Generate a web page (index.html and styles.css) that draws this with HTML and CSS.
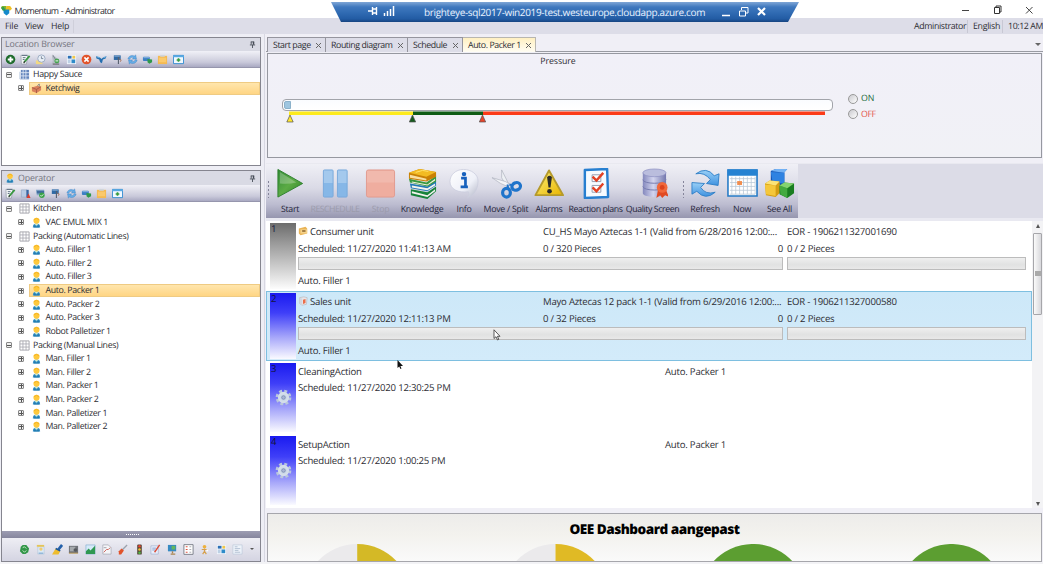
FILE: index.html
```html
<!DOCTYPE html>
<html lang="en">
<head>
<meta charset="utf-8">
<title>Momentum - Administrator</title>
<link rel="stylesheet" href="styles.css">
</head>
<body>
<svg class="sprite" width="0" height="0" aria-hidden="true">
  <defs>
    <linearGradient id="gGreen" x1="0" y1="0" x2="1" y2="1"><stop offset="0" stop-color="#2f8a35"/><stop offset=".5" stop-color="#5cab45"/><stop offset="1" stop-color="#2f8425"/></linearGradient>
    <linearGradient id="gBlue" x1="0" y1="0" x2="0" y2="1"><stop offset="0" stop-color="#9ad0f7"/><stop offset="1" stop-color="#3f92e0"/></linearGradient>
    <linearGradient id="gYellow" x1="0" y1="0" x2="1" y2="1"><stop offset="0" stop-color="#fff27a"/><stop offset="1" stop-color="#e8b400"/></linearGradient>
    <linearGradient id="gDb" x1="0" y1="0" x2="1" y2="0"><stop offset="0" stop-color="#8488bd"/><stop offset=".45" stop-color="#d3d5ef"/><stop offset="1" stop-color="#7377ad"/></linearGradient>
    <linearGradient id="gBubble" x1="0" y1="0" x2="1" y2="1"><stop offset="0" stop-color="#fff"/><stop offset=".6" stop-color="#eef0f8"/><stop offset="1" stop-color="#b2b5c5"/></linearGradient>
  </defs>
  <symbol id="plus" viewBox="0 0 12 12"><circle cx="6" cy="6" r="5.2" fill="#1d6b2b"/><path d="M6 3v6M3 6h6" stroke="#fff" stroke-width="2"/></symbol>
  <symbol id="edit" viewBox="0 0 12 12"><path d="M1 1.5h7.500l-1.500 9.500H1.500z" fill="#f4f6f8" stroke="#8b93a0" stroke-width=".7"/><path d="M2 1.500h6M3 4h3M3 6h2" stroke="#56697c"/><path d="M4.500 9l6-7" stroke="#37963f" stroke-width="2"/><path d="M4 10l1.300-2" stroke="#333" stroke-width="1.200"/></symbol>
  <symbol id="clock" viewBox="0 0 12 12"><rect x="1" y="7" width="7" height="4" fill="#f2d982"/><circle cx="7" cy="5" r="4" fill="#e8eef6" stroke="#98a9bf"/><path d="M7 2.500V5h2" fill="none" stroke="#5a6b80" stroke-width=".8"/></symbol>
  <symbol id="tools" viewBox="0 0 12 12"><path d="M2 2l4 1 4 5-2 3H2l1-4z" fill="#b6bcc6"/><path d="M3 1l3 5" stroke="#777f8b"/><circle cx="7.500" cy="7.500" r="2.700" fill="#47a452"/><path d="M6 7.500h3" stroke="#fff"/><path d="M3 11h7" stroke="#555"/></symbol>
  <symbol id="tiles" viewBox="0 0 12 12"><rect x="1" y="1" width="10" height="10" fill="#eef4fb"/><path d="M2 2h4v3H2z" fill="#2c6fb5"/><path d="M7 2h3v3H7z" fill="#f2c748"/><path d="M2 6h3v4H2z" fill="#bcd0e4"/><path d="M6 6h4v4H6z" fill="#2e8bc9"/></symbol>
  <symbol id="delete" viewBox="0 0 12 12"><circle cx="6" cy="6" r="5.300" fill="#e2532b"/><path d="M3.700 3.700l4.600 4.600M8.300 3.700L3.700 8.300" stroke="#fff" stroke-width="1.700"/></symbol>
  <symbol id="bird" viewBox="0 0 12 12"><path d="M0 2.500l4 1 2 2 2-2 3.500-1-1 2.500-3 1-1 4-2-1-1-3-3-1z" fill="#256fb0"/><path d="M1 3l3 1M8 4l3-1" stroke="#7fc0ea"/></symbol>
  <symbol id="flag" viewBox="0 0 12 12"><path d="M2 1.500h7.500v5H2z" fill="#316aa5"/><path d="M7 3v8" stroke="#57606e" stroke-width="1.200"/><path d="M2.500 2.500h6" stroke="#7ea6d0"/><path d="M8 5.500l2 1-1 2" stroke="#a9745d" fill="none"/></symbol>
  <symbol id="sync" viewBox="0 0 12 12"><path d="M1 5.500C1.500 2.500 5 .5 8 2.200L9.500 1l.8 4.500H6L7 4C5 3 3.500 4 3 5.800zM11 6.500C10.500 9.500 7 11.500 4 9.800L2.500 11l-.8-4.500H6L5 8c2 1 3.500 0 4-1.800z" fill="#65aee8" stroke="#2f75bb" stroke-width=".4"/></symbol>
  <symbol id="link" viewBox="0 0 12 12"><rect x="1" y="3" width="7.500" height="4.500" rx="1" fill="#3c7fc4"/><path d="M1.500 4h6.500" stroke="#8ebae4"/><path d="M6 5.500l5 .5v3L8 10.500 6 9z" fill="#2f994b"/></symbol>
  <symbol id="clip" viewBox="0 0 12 12"><path d="M1 2h10v9H1z" fill="#f4b952"/><path d="M3.500 1h5v2h-5z" fill="#d0d4da"/><path d="M2 4h8v5H2z" fill="#fbc96b"/></symbol>
  <symbol id="window" viewBox="0 0 12 12"><path d="M.5 1.500h11v9H.5z" fill="#f1f9ff" stroke="#2f8ad0"/><path d="M0 2.500h12" stroke="#58a9e3" stroke-width="2"/><path d="M6 4.500v4M4 6.500h4" stroke="#359b3f" stroke-width="1.800"/></symbol>
  <symbol id="pipe" viewBox="0 0 12 12"><path d="M1.500 2h6v8h-6z" fill="#b9cbe4" stroke="#8095b5" stroke-width=".5"/><path d="M7 2h2.500v8H7z" fill="#3865a2"/><path d="M7 11l2.300-5 2.200 5z" fill="#da3c2e"/></symbol>
  <symbol id="cart" viewBox="0 0 12 12"><path d="M1 2h9v6H2z" fill="#88a9c9"/><path d="M2 3h8v3H2z" fill="#406c9d"/><circle cx="7.500" cy="8" r="3" fill="#39a348"/><path d="M6 8l1 1 2-2" fill="none" stroke="#fff"/></symbol>
  <symbol id="person" viewBox="0 0 12 12"><path d="M2 11.500Q2 7 6 7t4 4.500z" fill="#3d96cf"/><path d="M3 8.500l3 2 3-2v3H3z" fill="#247cad"/><path d="M4 7.500l2 2 2-2z" fill="#d9f0c8"/><circle cx="6" cy="4" r="3.300" fill="#ffc93c"/><path d="M3 3Q6 0 9 3" fill="none" stroke="#f3b01f"/></symbol>
  <symbol id="grid" viewBox="0 0 12 12"><path d="M1 1h10v10H1z" fill="#fff" stroke="#98989f" stroke-width=".9"/><path d="M4.300 1v10M7.700 1v10M1 4.300h10M1 7.700h10" stroke="#a8a8b0" stroke-width=".9"/></symbol>
  <symbol id="building" viewBox="0 0 12 12"><path d="M2 1h9v10H2z" fill="#6486bd"/><path d="M1 3v8h10" fill="none" stroke="#b6c7df"/><path d="M4.500 1v10M7.500 1v10M2 4h9M2 7.500h9" stroke="#e4edf9" stroke-width=".9"/></symbol>
  <symbol id="brick" viewBox="0 0 12 12"><path d="M1 5l6-2 4 1v4l-5 3-5-2z" fill="#d9805c"/><path d="M1 5l5 2 5-3M6 7v4" fill="none" stroke="#a75b45"/><path d="M7 3l2-2v3" stroke="#7c8188" fill="none"/></symbol>
  <symbol id="pin" viewBox="0 0 8 8"><path d="M2 1h4M2.500 1v3M5 1v3M1 4.500h6M4 4.500V8" stroke="#454a55" fill="none"/><path d="M4.500 1h1.500v3H4.500z" fill="#454a55"/></symbol>
  <symbol id="recycle" viewBox="0 0 12 12"><path d="M4 1h4l3 4-1 4-3 2H4L1 8l1-5z" fill="#319548"/><path d="M4 4l2-1 2 2M8 7L6 9 4 7" fill="none" stroke="#c8edc7"/></symbol>
  <symbol id="badge" viewBox="0 0 12 12"><path d="M3 3h7v8H3z" fill="#dbe9f5" stroke="#a9bdd2" stroke-width=".5"/><path d="M2 1h8v2H2z" fill="#e5c557"/><circle cx="6.500" cy="5.500" r="1.800" fill="#f0cc72"/><path d="M4 10h5" stroke="#6a9dcc"/></symbol>
  <symbol id="brush" viewBox="0 0 12 12"><path d="M11 1L7 6" stroke="#2360aa" stroke-width="3"/><path d="M4 5l5 3-2 3.500H0z" fill="#eebc2f"/><path d="M4 5l5 2.500" stroke="#1b5597" stroke-width="1.800"/></symbol>
  <symbol id="camera" viewBox="0 0 12 12"><path d="M1 2h10v8H1z" fill="#6f7278"/><path d="M2 3h6v5H2z" fill="#a5a9ad"/><circle cx="8" cy="6.500" r="2" fill="#55585d"/><path d="M1 10h10" stroke="#bb974e"/></symbol>
  <symbol id="chart" viewBox="0 0 12 12"><path d="M1 1h10v10H1z" fill="#d5eaf9" stroke="#78a5ca" stroke-width=".6"/><path d="M1 8l3-3 2 2 5-5v9H1z" fill="#2f9851"/></symbol>
  <symbol id="sheet" viewBox="0 0 12 12"><path d="M2 1h6l3 3v7H2z" fill="#f5f5f8" stroke="#9ca0ab" stroke-width=".7"/><path d="M3 9l3-3 2 0 2-2" fill="none" stroke="#ca5b52"/><path d="M3 4h3" stroke="#9ca0ab"/></symbol>
  <symbol id="dart" viewBox="0 0 12 12"><path d="M11 1L5 7" stroke="#9ca3ad" stroke-width="1.500"/><path d="M5 5l2.500 2-3 4.500H2V8z" fill="#e1532b"/></symbol>
  <symbol id="traffic" viewBox="0 0 12 12"><rect x="3.500" y=".5" width="5" height="11" rx="1" fill="#574638"/><circle cx="6" cy="2.500" r="1.400" fill="#e9442d"/><circle cx="6" cy="6" r="1.400" fill="#f2c435"/><circle cx="6" cy="9.500" r="1.400" fill="#4fb646"/></symbol>
  <symbol id="note" viewBox="0 0 12 12"><path d="M1 2h8v9H1z" fill="#e8effc" stroke="#93a5c8" stroke-width=".6"/><path d="M2.500 4.500h4M2.500 6.500h3" stroke="#839fce"/><path d="M10.500 1L5 9" stroke="#da4a36" stroke-width="1.500"/></symbol>
  <symbol id="screen" viewBox="0 0 12 12"><path d="M1 1h9v7H1z" fill="#368ac2"/><path d="M5 2h4v4H5z" fill="#64b75d"/><path d="M6 8v2M4 11h5" stroke="#a98550" stroke-width="1.500"/></symbol>
  <symbol id="checklist" viewBox="0 0 12 12"><path d="M1 .7h10v10.600H1z" fill="#fff" stroke="#777b85"/><path d="M3 3h2M3 6h2M3 9h2" stroke="#df513e" stroke-width="1.300"/><path d="M7 3h2M7 6h2M7 9h2" stroke="#a7a7b0"/></symbol>
  <symbol id="worker" viewBox="0 0 12 12"><circle cx="6" cy="3" r="2" fill="#eeb13d"/><path d="M3 6h6M6 5v3l-2 3M6 8l2 3" stroke="#d6a04c" fill="none" stroke-width="1.300"/><path d="M8 6h2v2H8z" fill="#fff"/></symbol>
  <symbol id="form" viewBox="0 0 12 12"><path d="M1 1h10v10H1z" fill="#eef3fa" stroke="#b8c6d8" stroke-width=".7"/><path d="M3 3h3M3 5h6M3 7h4M3 9h6" stroke="#b0bfd1"/></symbol>
  <symbol id="carton" viewBox="0 0 12 12"><path d="M1 3l8-2 2 2v6l-8 2-2-2z" fill="#eab456"/><path d="M3 4h8v5H3z" fill="#f5d28a"/><path d="M5 5h4v2H5z" fill="#936e38"/></symbol>
  <symbol id="box" viewBox="0 0 12 12"><path d="M2 2l5-1 4 1-1 8-5 1-3-2z" fill="#e5e6eb" stroke="#b4a7a7" stroke-width=".6"/><path d="M2 2l3 1v8L2 9z" fill="#d3d7e0"/><path d="M6 4.500l3-1v5l-3 1z" fill="#ec6e49"/></symbol>
  <symbol id="gear" viewBox="0 0 16 16"><circle cx="8" cy="8" r="6.100" fill="none" stroke="#b9c7dc" stroke-width="2.600" stroke-dasharray="2.700 2.090"/><circle cx="8" cy="8" r="4.100" fill="#c7d7e8" stroke="#d4deea" stroke-width="2.400"/><circle cx="8" cy="8" r="1.700" fill="#a9b7d8" stroke="#7986a8" stroke-width=".7"/></symbol>
</svg>

<div class="app">
  <header class="titlebar">
    <svg class="logo" viewBox="0 0 12 12"><path d="M1 1h5v5L2 6 0 3z" fill="#7eb52f"/><path d="M6 1h4l2 3-2 2H5z" fill="#f0bf21"/><path d="M2.500 5h6.500v4L6 11.500 3 9z" fill="#158acb"/><path d="M0 3l3-1 2 4H2z" fill="#329b53"/></svg>
    <span class="app-name">Momentum - Administrator</span>
    <svg class="winctl" viewBox="0 0 80 12"><path d="M2 6.500h7" stroke="#444" /><path d="M34.500 3.500h5v6h-5zM36 3V2h5v6h-1.500" fill="none" stroke="#333"/><path d="M66 3l6.500 6.500M72.500 3L66 9.500" stroke="#444"/></svg>
  </header>
  <nav class="menubar">
    <span class="m-file">File</span><span class="m-view">View</span><span class="m-help">Help</span>
    <span class="status first">Administrator</span><span class="status lang">English</span><span class="status time">10:12 AM</span>
  </nav>

  <div class="rdp">
    <svg class="rdp-left" viewBox="0 0 30 12"><path d="M1 6h4M5.500 2v8M5.500 4h4M5.500 8h4M9.500 2v8" stroke="#fff" stroke-width="1.400" fill="none"/><path d="M17.500 8v3M20.500 6v5M23.500 4v7M26.500 1v10" stroke="#fff" stroke-width="1.500"/></svg>
    <span class="rdp-host">brighteye-sql2017-win2019-test.westeurope.cloudapp.azure.com</span>
    <svg class="rdp-ctl" viewBox="0 0 48 14"><path d="M1 10.500h8" stroke="#fff" stroke-width="1.600"/><path d="M18.500 6h6v5h-6zM20.500 5V2.500h6.500V8H25" stroke="#fff" fill="none"/><path d="M37 3l7 7M44 3l-7 7" stroke="#fff" stroke-width="2.200"/></svg>
  </div>

  <main class="main">
    <aside class="left">
      <section class="panel location">
        <h2 class="panel-head"><span>Location Browser</span><svg class="pin"><use href="#pin"/></svg></h2>
        <div class="tools">
          <svg><use href="#plus"/></svg><svg><use href="#edit"/></svg><svg><use href="#clock"/></svg><svg><use href="#tools"/></svg><svg><use href="#tiles"/></svg><svg><use href="#delete"/></svg><svg><use href="#bird"/></svg><svg><use href="#flag"/></svg><svg><use href="#sync"/></svg><svg><use href="#link"/></svg><svg><use href="#clip"/></svg><svg><use href="#window"/></svg>
        </div>
        <div class="tree">
          <div class="node root"><i class="exp minus"></i><span class="label"><svg><use href="#building"/></svg>Happy Sauce</span></div>
          <div class="node"><i class="exp"></i><span class="label sel"><svg><use href="#brick"/></svg>Ketchwig</span></div>
        </div>
      </section>
      <section class="panel operator">
        <h2 class="panel-head"><svg class="head-icon"><use href="#person"/></svg><span>Operator</span><svg class="pin"><use href="#pin"/></svg></h2>
        <div class="tools">
          <svg><use href="#edit"/></svg><svg><use href="#pipe"/></svg><svg><use href="#cart"/></svg><svg><use href="#flag"/></svg><svg><use href="#sync"/></svg><svg><use href="#link"/></svg><svg><use href="#clip"/></svg><svg><use href="#window"/></svg>
        </div>
        <div class="tree">
          <div class="node root"><i class="exp minus"></i><span class="label"><svg><use href="#grid"/></svg>Kitchen</span></div>
          <div class="node"><i class="exp"></i><span class="label"><svg><use href="#person"/></svg>VAC EMUL MIX 1</span></div>
          <div class="node root"><i class="exp minus"></i><span class="label"><svg><use href="#grid"/></svg>Packing (Automatic Lines)</span></div>
          <div class="node"><i class="exp"></i><span class="label"><svg><use href="#person"/></svg>Auto. Filler 1</span></div>
          <div class="node"><i class="exp"></i><span class="label"><svg><use href="#person"/></svg>Auto. Filler 2</span></div>
          <div class="node"><i class="exp"></i><span class="label"><svg><use href="#person"/></svg>Auto. Filler 3</span></div>
          <div class="node"><i class="exp"></i><span class="label sel"><svg><use href="#person"/></svg>Auto. Packer 1</span></div>
          <div class="node"><i class="exp"></i><span class="label"><svg><use href="#person"/></svg>Auto. Packer 2</span></div>
          <div class="node"><i class="exp"></i><span class="label"><svg><use href="#person"/></svg>Auto. Packer 3</span></div>
          <div class="node"><i class="exp"></i><span class="label"><svg><use href="#person"/></svg>Robot Palletizer 1</span></div>
          <div class="node root"><i class="exp minus"></i><span class="label"><svg><use href="#grid"/></svg>Packing (Manual Lines)</span></div>
          <div class="node"><i class="exp"></i><span class="label"><svg><use href="#person"/></svg>Man. Filler 1</span></div>
          <div class="node"><i class="exp"></i><span class="label"><svg><use href="#person"/></svg>Man. Filler 2</span></div>
          <div class="node"><i class="exp"></i><span class="label"><svg><use href="#person"/></svg>Man. Packer 1</span></div>
          <div class="node"><i class="exp"></i><span class="label"><svg><use href="#person"/></svg>Man. Packer 2</span></div>
          <div class="node"><i class="exp"></i><span class="label"><svg><use href="#person"/></svg>Man. Palletizer 1</span></div>
          <div class="node"><i class="exp"></i><span class="label"><svg><use href="#person"/></svg>Man. Palletizer 2</span></div>
        </div>
        <div class="splitter"><i></i></div>
        <div class="dock">
          <svg><use href="#recycle"/></svg><svg><use href="#badge"/></svg><svg><use href="#brush"/></svg><svg><use href="#camera"/></svg><svg><use href="#chart"/></svg><svg><use href="#sheet"/></svg><svg><use href="#dart"/></svg><svg><use href="#traffic"/></svg><svg><use href="#note"/></svg><svg><use href="#screen"/></svg><svg><use href="#checklist"/></svg><svg><use href="#worker"/></svg><svg><use href="#tiles"/></svg><svg><use href="#form"/></svg><i class="more"></i>
        </div>
      </section>
    </aside>

    <section class="right">
      <div class="tabs">
        <div class="tab t1"><span>Start page</span><i class="x"></i></div><div class="tab t2"><span>Routing diagram</span><i class="x"></i></div><div class="tab t3"><span>Schedule</span><i class="x"></i></div><div class="tab t4 on"><span>Auto. Packer 1</span><i class="x"></i></div>
        <i class="tabmenu"></i>
      </div>
      <div class="pressure">
        <div class="pressure-title">Pressure</div>
        <div class="pressure-body">
          <div class="gauge">
            <div class="track"><i></i></div>
            <svg class="scale" viewBox="0 0 551 12"><path d="M7 2.200h124" stroke="#fdea1d" stroke-width="3.600"/><path d="M131 2.200h70" stroke="#0f5c16" stroke-width="3.600"/><path d="M201 2.200h342" stroke="#fb3b18" stroke-width="3.600"/><g stroke="#555" stroke-width=".7"><path d="M8 4l3.200 7H4.800z" fill="#ffe62d"/><path d="M130.500 4l3.200 7h-6.400z" fill="#155b1d"/><path d="M200.500 4l3.200 7h-6.400z" fill="#e8432a"/></g></svg>
          </div>
          <div class="radios"><div class="on-text"><i></i>ON</div><div class="off-text"><i></i>OFF</div></div>
        </div>
      </div>

      <div class="ribbon">
        <div class="ribbon-in">
          <i class="grip"></i>
          <div class="btn b32"><svg viewBox="0 0 32 32"><path d="M3 1.500v28.500L28.500 16z" fill="url(#gGreen)" stroke="#2f8130" stroke-linejoin="round"/><path d="M5 4v12q9 1 17-1z" fill="#fff" opacity=".25"/></svg><span>Start</span></div>
          <div class="btn b58 off"><svg viewBox="0 0 32 32"><g fill="#86b7e7" stroke="#79a9dc"><rect x="3.500" y="2" width="10" height="28" rx="1"/><rect x="18" y="2" width="10" height="28" rx="1"/></g><path d="M4 2.500h9v13H4zM18.500 2.500h9v13h-9z" fill="#fff" opacity=".25"/></svg><span>RESCHEDULE</span></div>
          <div class="btn b33 off"><svg viewBox="0 0 32 32"><rect x="1.500" y="2" width="29" height="28" rx="2" fill="#efad9f" stroke="#e19b90"/><path d="M2 3h28v12H2z" fill="#fff" opacity=".15"/></svg><span>Stop</span></div>
          <div class="btn b50"><svg viewBox="0 0 32 32"><path d="M4 22l17 3 9-6v5l-9 8-17-4z" fill="#17833b"/><path d="M5 24l16 4 8-6v2l-8 6-16-4z" fill="#f1f2ec"/><path d="M3 16l18 3 9-6v5l-9 6-17-3z" fill="#2179b6"/><path d="M5 18l16 3 8-5v2l-8 5-16-3z" fill="#f4f4ee"/><path d="M2 11l18 4 10-7v6l-9 5-18-4z" fill="#37993f"/><path d="M5 14l16 3 8-6v2l-8 5-16-3z" fill="#f5f0dd"/><path d="M2 5L13 1l17 3v5l-10 5L2 11z" fill="#c98005"/><path d="M2 5L13 1l17 3-10 5z" fill="#f2bb23"/><path d="M3 7l17 4v2L3 10z" fill="#f8dfa1"/><path d="M9 4.500l7-2 6 1" stroke="#ffe26e" fill="none"/></svg><span>Knowledge</span></div>
          <div class="btn b34"><svg viewBox="0 0 32 32"><path d="M15 1.500c8 0 15 5 15 12 0 10-6 16-11 17 2-3 2-4 1-6C10 26 1 22 1 14 1 7 7 1.500 15 1.500z" fill="url(#gBubble)" stroke="#cacddd" stroke-width=".8"/><path d="M12.500 10.500H17V19M12 19.500h7.500" fill="none" stroke="#1761bd" stroke-width="2.800"/><circle cx="15.500" cy="6.300" r="2.300" fill="#1761bd"/></svg><span>Info</span></div>
          <div class="btn b50"><svg viewBox="0 0 32 32"><path d="M11 2l7 14-2 3-5-9z" fill="#edf0f4" stroke="#a3a8b5" stroke-width=".6"/><path d="M1 10l14 4 5 3-3 2-7-3z" fill="#f4f5f8" stroke="#a3a8b5" stroke-width=".6"/><ellipse cx="16" cy="25.500" rx="4" ry="4.500" fill="none" stroke="#1f74cb" stroke-width="3.300"/><ellipse cx="26" cy="19" rx="4.500" ry="3.800" transform="rotate(-25 26 19)" fill="none" stroke="#1f74cb" stroke-width="3.300"/><path d="M17 17l1 5M19 17l3 1" stroke="#1f74cb" stroke-width="2"/></svg><span>Move / Split</span></div>
          <div class="btn b36"><svg viewBox="0 0 32 32"><path d="M15.500 2.500L30 28H1.500z" fill="url(#gYellow)" stroke="#b59a2c" stroke-width="2" stroke-linejoin="round"/><path d="M13.500 9.500q2.500-3 5 0L17 20h-2z" fill="#2c2b28"/><circle cx="16" cy="24" r="2.400" fill="#2c2b28"/></svg><span>Alarms</span></div>
          <div class="btn b57"><svg viewBox="0 0 32 32"><path d="M5 2l23-1 1 29-24 1z" fill="#f6fbff" stroke="#277fd0" stroke-width="2.500" stroke-linejoin="round"/><path d="M12.500 7h9v7h-9zM12.500 18h9v7h-9z" fill="#fff" stroke="#949db0"/><path d="M13 9l4 4 7-8M13 20l4 4 7-8" fill="none" stroke="#e24124" stroke-width="2.500"/></svg><span>Reaction plans</span></div>
          <div class="btn b57"><svg viewBox="0 0 32 32"><path d="M6 5v21c0 5 24 5 24 0V5z" fill="url(#gDb)"/><ellipse cx="18" cy="5" rx="12" ry="4" fill="#babddd" stroke="#8b8fc1" stroke-width=".7"/><path d="M6 12c0 5 24 5 24 0M6 19c0 5 24 5 24 0" fill="none" stroke="#777cae"/><path d="M22 21l-2 10 4-3 2 3 3-3 4 2-4-10z" fill="#e14a22"/><circle cx="26" cy="20" r="5.500" fill="#f1683a"/><circle cx="26" cy="20" r="2.500" fill="#dc421d"/></svg><span>Quality Screen</span></div>
          <i class="grip"></i>
          <div class="btn b36"><svg viewBox="0 0 32 32"><g fill="url(#gBlue)" stroke="#2c7cc4" stroke-width=".9" stroke-linejoin="round"><path d="M6 6Q17-2 25 8l5-2-1 12-12-2 4-4Q15 4 6 6z"/><path d="M26 25Q16 34 7 24l-5 3V15l13 1-4 4q5 8 15 5z"/></g></svg><span>Refresh</span></div>
          <div class="btn b38"><svg viewBox="0 0 32 32"><path d="M1 2h30v27H1z" fill="#fff" stroke="#2379c5" stroke-width="1.600"/><path d="M.5 1.500h31V8H.5z" fill="#2683d2"/><path d="M3 11h26M3 15h26M3 19h26M3 23h26M3 27h26M5 9v18M9 9v18M13 9v18M17 9v18M21 9v18M25 9v18M29 9v18" stroke="#b8c7d6" stroke-width=".8"/><path d="M10.500 13.500h5v4h-5z" fill="#f18d4d"/></svg><span>Now</span></div>
          <div class="btn b37"><svg viewBox="0 0 32 32"><path d="M7 3l5-2h12l-3 3v11l-4 3-10-3z" fill="#1454b4"/><path d="M7 4l14 1v11L9 15z" fill="#2f82e1"/><path d="M7 3l5-2h12l-3 4z" fill="#72b1f4"/><path d="M1 16l5-3 10 1 1 11-5 5-10-2z" fill="#d49c12"/><path d="M1 17l11 1v11L2 27z" fill="#f5c73a"/><path d="M1 16l5-3 10 1-4 4z" fill="#fbe377"/><path d="M16 18l5-3 10 1v10l-7 5-8-4z" fill="#197d20"/><path d="M16 18l8 3v10l-7-4z" fill="#43aa3f"/><path d="M16 18l5-3 10 1-7 5z" fill="#85d370"/></svg><span>See All</span></div>
        </div>
      </div>

      <div class="list">
        <div class="items">
          <article class="item h70">
            <div class="stripe grey"><b>1</b></div>
            <div class="grid">
              <div class="ttl"><svg><use href="#carton"/></svg>Consumer unit</div><div class="mid">CU_HS Mayo Aztecas 1-1 (Valid from 6/28/2016 12:00:...</div><div class="eor">EOR - 1906211327001690</div>
              <div>Scheduled: 11/27/2020 11:41:13 AM</div><div class="count"><span>0 / 320 Pieces</span><span>0</span></div><div>0 / 2 Pieces</div>
              <div class="bar wide"></div><div class="bar"></div>
              <div class="foot">Auto. Filler 1</div>
            </div>
          </article>
          <article class="item h70 picked">
            <div class="stripe"><b>2</b></div>
            <div class="grid">
              <div class="ttl"><svg><use href="#box"/></svg>Sales unit</div><div class="mid">Mayo Aztecas 12 pack 1-1 (Valid from 6/29/2016 12:00:...</div><div class="eor">EOR - 1906211327000580</div>
              <div>Scheduled: 11/27/2020 12:11:13 PM</div><div class="count"><span>0 / 32 Pieces</span><span>0</span></div><div>0 / 2 Pieces</div>
              <div class="bar wide"></div><div class="bar"></div>
              <div class="foot">Auto. Filler 1</div>
            </div>
          </article>
          <article class="item h73">
            <div class="stripe"><b>3</b><svg><use href="#gear"/></svg></div>
            <div class="action"><div class="line"><span>CleaningAction</span><span>Auto. Packer 1</span></div><div class="line">Scheduled: 11/27/2020 12:30:25 PM</div></div>
          </article>
          <article class="item h73">
            <div class="stripe"><b>4</b><svg><use href="#gear"/></svg></div>
            <div class="action"><div class="line"><span>SetupAction</span><span>Auto. Packer 1</span></div><div class="line">Scheduled: 11/27/2020 1:00:25 PM</div></div>
          </article>
        </div>
        <div class="scroll"><i class="up"></i><div class="thumb"></div><i class="down"></i></div>
      </div>

      <div class="dash">
        <div class="dash-title">OEE Dashboard aangepast</div>
        <svg viewBox="1.500 0 775 19"><path d="M49.700 19A53.700 53.700 0 0 1 90.700 0v19z" fill="#ebeaec"/><path d="M90.700 0a53.700 53.700 0 0 1 41 19h-41z" fill="#d4b926"/><path d="M248 19A53.700 53.700 0 0 1 289 0v19z" fill="#ebeaec"/><path d="M289 0a53.700 53.700 0 0 1 41 19h-41z" fill="#e0ba25"/><path d="M445.500 19a53.700 53.700 0 0 1 82 0z" fill="#5c9e31"/><path d="M644 19a53.700 53.700 0 0 1 82 0z" fill="#5c9e31"/></svg>
      </div>
    </section>
  </main>

  <svg class="cursor c1" viewBox="0 0 9 12"><path d="M1 .8v8.700l2-1.800 1.500 3.300 1.300-.6L4.400 7.300H7z" fill="#fff" stroke="#333" stroke-width=".8"/></svg>
  <svg class="cursor c2" viewBox="0 0 9 12"><path d="M.5 0v8l1.700-1.500L3.500 9l1-.5-1.100-2.500H6z" fill="#111"/></svg>
</div>
</body>
</html>
```
FILE: styles.css
```css
* { box-sizing: border-box; }
body { margin: 0; overflow: hidden; text-rendering: geometricPrecision; }
body, h2 { font: 8.800px/13px "Open Sans", "Noto Sans", sans-serif; color: #2d2d33; }
i { font-style: normal; }
svg { display: block; flex: none; }
.sprite { position: absolute; }
.app { position: relative; width: 1043px; height: 564px; display: flex; flex-direction: column; background: #dfdfe9; border-bottom: 2px solid #f3f3f6; letter-spacing: -.2px; white-space: nowrap; }

/* Window chrome */
.titlebar { height: 18px; background: #fff; display: flex; align-items: center; padding: 2px 3px 0 1px; font-size: 8.900px; }
.logo { width: 11px; height: 11px; margin-right: 2.500px; }
.app-name { letter-spacing: -.6px; word-spacing: .5px; }
.winctl { width: 80px; height: 12px; margin-left: auto; }
.menubar { height: 16px; display: flex; align-items: center; background: #dddde8; padding: 1px 0 0 5px; }
.m-file { width: 20px; }
.m-view { width: 26px; }
.m-help { border-right: 1px solid #cfcfda; width: 23px; }
.status { border-left: 1px solid #c8c8d4; padding-left: 5px; }
.status.first { margin-left: auto; border: 0; width: 53px; padding: 0; letter-spacing: -.35px; }
.status.lang { width: 35px; letter-spacing: -.3px; }
.status.time { width: 41px; letter-spacing: -.4px; }

.rdp { position: absolute; left: 331px; top: 2px; width: 468px; height: 20px; display: flex; align-items: center; color: #e9f3ff; background: linear-gradient(#7fa6d6 0, #3f78be 25%, #2d68b0 60%, #225ba3 85%, #174480 100%); clip-path: polygon(0 0, 100% 0, 457px 100%, 10px 100%); font-size: 10px; letter-spacing: -.35px; }
.rdp-left { width: 30px; height: 12px; margin: 0 27px 2px 36px; }
.rdp-host { width: 297px; }
.rdp-ctl { width: 48px; height: 14px; margin-bottom: 1px; }

.main { flex: 1; display: flex; min-height: 0; }
.left { flex: none; width: 265px; padding: 3px 3px 0 1px; display: flex; flex-direction: column; gap: 4px; background: #eeeef5; border-right: 1px solid #d8d8e2; }
.panel { background: #fff; border: 1px solid #85858f; display: flex; flex-direction: column; }
.location { height: 129px; }
.operator { flex: 1; min-height: 0; }
.panel-head { display: flex; align-items: center; height: 13px; margin: 0; padding: 0 4px 0 3px; background: #d9dae4; color: #74747e; letter-spacing: -.12px; }
.operator .panel-head { height: 14px; }
.head-icon { width: 10px; height: 10px; margin: 0 3px 0 0; }
.pin { width: 7px; height: 7px; margin-left: auto; }
.tools { display: flex; align-items: center; gap: 4.300px; height: 17px; padding-left: 2.500px; background: linear-gradient(#f1f1f7, #c9c9da 70%, #a9a9c2); border-bottom: 1px solid #9696ad; }
.tools svg { width: 11px; height: 11px; }

/* Trees */
.tree { flex: 1; min-height: 0; letter-spacing: -.36px; }
.node { height: 13.630px; display: flex; align-items: center; padding-left: 16px; }
.node.root { padding-left: 4px; }
.exp { width: 6px; height: 6px; flex: none; border: 1px solid #888; border-radius: 1px; background: linear-gradient(#555, #555) 50% 50% / 4px 1px no-repeat, linear-gradient(#555, #555) 50% 50% / 1px 4px no-repeat, #eee; }
.exp.minus { background: linear-gradient(#555, #555) 50% 50% / 4px 1px no-repeat, #eee; }
.label { display: flex; align-items: center; flex: 1; height: 13px; margin-left: 5px; padding-left: 1px; border: 1px solid transparent; }
.root .label { margin-left: 6px; padding-left: 0; }
.label svg { width: 11px; height: 11px; margin-right: 3.500px; }
.root .label svg { margin-right: 3px; }
.label.sel { background: linear-gradient(#ffe6ad, #ffd584); border-color: #efcb83; }
.splitter { height: 7px; background: linear-gradient(#9d9db2, #85859d); display: flex; justify-content: center; align-items: center; }
.splitter i { width: 13px; border-top: 1px dotted #fff; margin-left: 2px; }
.dock { height: 23px; display: flex; align-items: center; gap: 5.400px; padding-left: 17px; background: linear-gradient(#eeeef4, #d4d4e2); }
.dock svg { width: 11px; height: 11px; }
.more { border: 2px solid transparent; border-top: 2px solid #555; margin-left: 2px; }

/* Tabs */
.right { flex: 1; min-width: 0; display: flex; flex-direction: column; padding-left: 1px; background: #f0eff6; }
.tabs { height: 18px; padding: 3px 0 0 1px; display: flex; border-bottom: 1px solid #999ba2; letter-spacing: -.42px; }
.tab { height: 15px; display: flex; align-items: center; justify-content: space-between; padding: 0 4px 0 5px; border: 1px solid #95959e; border-left-width: 0; border-bottom: 0; background: #dddde8; }
.t1 { width: 59px; border-left-width: 1px; }
.t2 { width: 82px; }
.t3 { width: 55px; }
.t4 { width: 73px; }
.tab.on { background: linear-gradient(#fff0c2, #fffdf4); border-color: #b8b6b0; }
.x { width: 5px; height: 5px; background: linear-gradient(45deg, transparent 43%, #666 43% 57%, transparent 57%), linear-gradient(-45deg, transparent 43%, #666 43% 57%, transparent 57%); }
.tabmenu { margin: 6px 2px 0 auto; height: 0; border: 3px solid transparent; border-top-color: #666; }

.pressure { height: 105px; margin: 1px 1px 0; border: 1px solid #9698a0; background: linear-gradient(#f1f0f8, #f1f1f6); }
.pressure-title { width: 580px; padding-top: 1px; text-align: center; letter-spacing: -.1px; }
.pressure-body { display: flex; padding: 31px 0 0 14px; }
.gauge { width: 551px; }
.track { height: 12px; border: 1px solid #a2a4aa; border-radius: 4px; background: linear-gradient(#fafcff, #fff); padding: 1px 1px; }
.track i { display: block; width: 7px; height: 8px; background: #9fc6e0; border: 1px solid #8bb1ca; border-radius: 2px 0 0 2px; }
.scale { width: 551px; height: 12px; }
.radios { padding: 0 0 0 15px; margin-top: -8px; line-height: 15.500px; }
.radios div { display: flex; align-items: center; }
.radios i { width: 10px; height: 10px; margin-right: 3px; border: 1px solid #999; border-radius: 50%; background: linear-gradient(135deg, #c9c9ce, #fff); }
.on-text { color: #20683b; }
.off-text { color: #e4564b; letter-spacing: -.4px; }

/* Ribbon */
.ribbon { margin-top: 5px; height: 58px; background: #dcdce7; border-top: 1px solid #e9e9f0; border-bottom: 3px solid #e9e9f1; }
.ribbon-in { width: 532px; height: 54px; display: flex; align-items: stretch; background: linear-gradient(#f0f0f6 0, #dadae6 45%, #bcbcd0 75%, #9696af 100%); }
.grip { flex: none; width: 6px; height: 18px; margin: 16px 0; background: radial-gradient(circle, #85859a 0 .6px, transparent 1px) 0 0 / 3px 4px; border: 1px solid transparent; border-width: 0 2px 0 1px; background-clip: padding-box; }
.grip:first-child { width: 8px; border-width: 0 4px 0 1px; }
.btn { flex: none; display: flex; flex-direction: column; align-items: center; padding-top: 4px; color: #25253a; letter-spacing: -.28px; }
.btn svg { width: 31px; height: 31px; margin-bottom: 4px; }
.b32 { width: 32px; } .b33 { width: 33px; } .b34 { width: 34px; } .b36 { width: 36px; } .b37 { width: 37px; } .b38 { width: 38px; }
.b50 { width: 50px; } .b57 { width: 57px; letter-spacing: -.42px; } .b58 { width: 58px; letter-spacing: -.55px; }
.off { color: #9b9bac; }

/* Work orders */
.list { height: 288px; display: flex; background: #fff; font-size: 9.600px; letter-spacing: -.22px; }
.items { width: 766px; }
.item { display: flex; padding: 2px 6px 2px 4px; gap: 2px; }
.h70 { height: 70px; }
.h73 { height: 73px; }
.picked { background: linear-gradient(#cde8f8, #d3ebfa); border: 1px solid #7ebfe0; padding: 1px 5px 1px 3px; }
.stripe { flex: none; width: 26px; padding-left: 1px; background: linear-gradient(#1a1af0, #3f3ff8 30%, #a9a9fa 68%, #fafaff); }
.stripe.grey { background: linear-gradient(#6c6c6c, #999 30%, #fcfcfc); }
.stripe b { display: block; font-weight: 400; line-height: 12px; color: #161640; }
.stripe svg { width: 17px; height: 17px; margin: 14px auto 0 4px; }
.grid { display: grid; grid-template-columns: 245px 240px 243px; grid-template-rows: 17px 15px 15px 17px; width: 728px; align-content: start; }
.grid > div { line-height: 17px; }
.eor, .count + div { padding-left: 4px; }
.ttl { display: flex; }
.ttl svg { width: 10px; height: 10px; margin: 3px 2px 0 0; }
.count { display: flex; justify-content: space-between; }
.bar { height: 13px; margin: 2px 0 0 4px; border: 1px solid #bcbcbc; background: linear-gradient(#efefef, #e1e2e2 60%, #e8e8e8); }
.bar.wide { grid-column: span 2; margin-left: 0; }
.foot { padding-top: 2px; }
.action { flex: 1; padding-top: 1px; }
.line { display: flex; line-height: 16px; }
.line span { width: 367px; }
.scroll { width: 11px; background: #f3f3f5; display: flex; flex-direction: column; align-items: center; margin-left: auto; }
.up { border: 2.500px solid transparent; border-bottom: 4px solid #555; margin: 1px 0 5px; height: 0; }
.thumb { width: 9px; height: 82px; border: 1px solid #a6a6aa; border-radius: 1px; background: linear-gradient(#aaa, #aaa) 50% 50% / 6px 5px no-repeat, linear-gradient(90deg, #fafafa, #d8d8dc); }
.down { border: 2.500px solid transparent; border-top: 4px solid #555; margin-top: auto; height: 0; }

.dash { margin: 5px 1px 0; border: 1px solid #a6a6ac; height: 49px; overflow: hidden; background: linear-gradient(#edecea, #f3f2ee 45%, #fafafa); display: flex; flex-direction: column; justify-content: space-between; }
.dash-title { text-align: center; font: 800 13.600px/30px "Open Sans", "Noto Sans", sans-serif; color: #000; letter-spacing: -.5px; }
.dash svg { width: 775px; height: 19px; }

.cursor { position: absolute; width: 9px; height: 12px; }
.c1 { left: 493px; top: 329px; }
.c2 { left: 397px; top: 360px; }
```
